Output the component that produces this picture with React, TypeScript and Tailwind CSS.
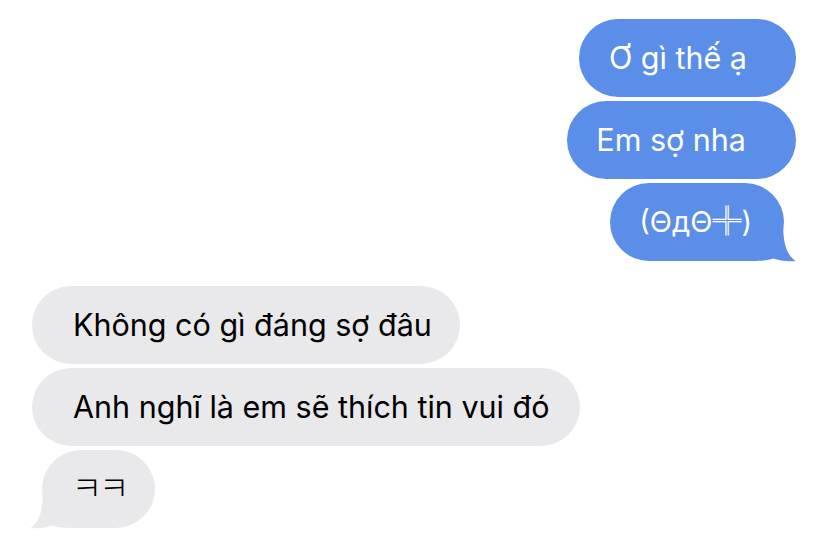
import React from "react";

const BLUE = "#5b8ee9";
const GRAY = "#e9e9eb";

function Tail({ color, side }: { color: string; side: "right" | "left" }) {
  return (
    <svg
      width="52"
      height="41"
      viewBox="0 0 52 41"
      className={
        side === "right"
          ? "absolute pointer-events-none"
          : "absolute pointer-events-none -scale-x-100"
      }
      style={
        side === "right"
          ? { right: -12, bottom: -1 }
          : { left: -12, bottom: -1 }
      }
    >
      <path
        d="M0 0 H39 C39 22 42 33 51.5 40 C44 41 35 39.5 29 37.5 C24 39.5 18 40 0 40 Z"
        fill={color}
      />
    </svg>
  );
}

function Bubble({
  children,
  color,
  textColor,
  className,
  tail,
}: {
  children: React.ReactNode;
  color: string;
  textColor: string;
  className: string;
  tail?: "left" | "right";
}) {
  return (
    <div
      className={`relative h-[78px] rounded-[39px] flex items-center whitespace-nowrap ${className}`}
      style={{ backgroundColor: color, color: textColor }}
    >
      <span className="relative z-10">{children}</span>
      {tail && <Tail color={color} side={tail} />}
    </div>
  );
}

export default function App() {
  return (
    <div
      className="w-[828px] h-[543px] bg-white overflow-hidden flex flex-col pt-[19px] px-[32px]"
      style={{ fontFamily: "Inter, 'Noto Sans', 'Noto Sans CJK KR', sans-serif" }}
    >
      <div className="flex flex-col items-end gap-[4px]">
        <Bubble color={BLUE} textColor="#fff" className="text-[30.5px] pl-[30px] pr-[49px]">
          Ơ gì thế ạ
        </Bubble>
        <Bubble color={BLUE} textColor="#fff" className="text-[30.5px] pl-[29px] pr-[50px]">
          Em sợ nha
        </Bubble>
        <Bubble color={BLUE} textColor="#fff" className="text-[29px] pl-[29px] pr-[32px] mr-[12px]" tail="right">
          (ΘдΘ╬)
        </Bubble>
      </div>
      <div className="flex flex-col items-start gap-[4px] mt-[25px]">
        <Bubble color={GRAY} textColor="#000" className="text-[30.5px] pl-[41px] pr-[28px]">
          Không có gì đáng sợ đâu
        </Bubble>
        <Bubble color={GRAY} textColor="#000" className="text-[30.5px] pl-[41px] pr-[30px]">
          Anh nghĩ là em sẽ thích tin vui đó
        </Bubble>
        <Bubble
          color={GRAY}
          textColor="#000"
          className="text-[33px] font-light tracking-[-3px] w-[113px] justify-center pl-[1px] ml-[10px]"
          tail="left"
        >
          ㅋㅋ
        </Bubble>
      </div>
    </div>
  );
}
